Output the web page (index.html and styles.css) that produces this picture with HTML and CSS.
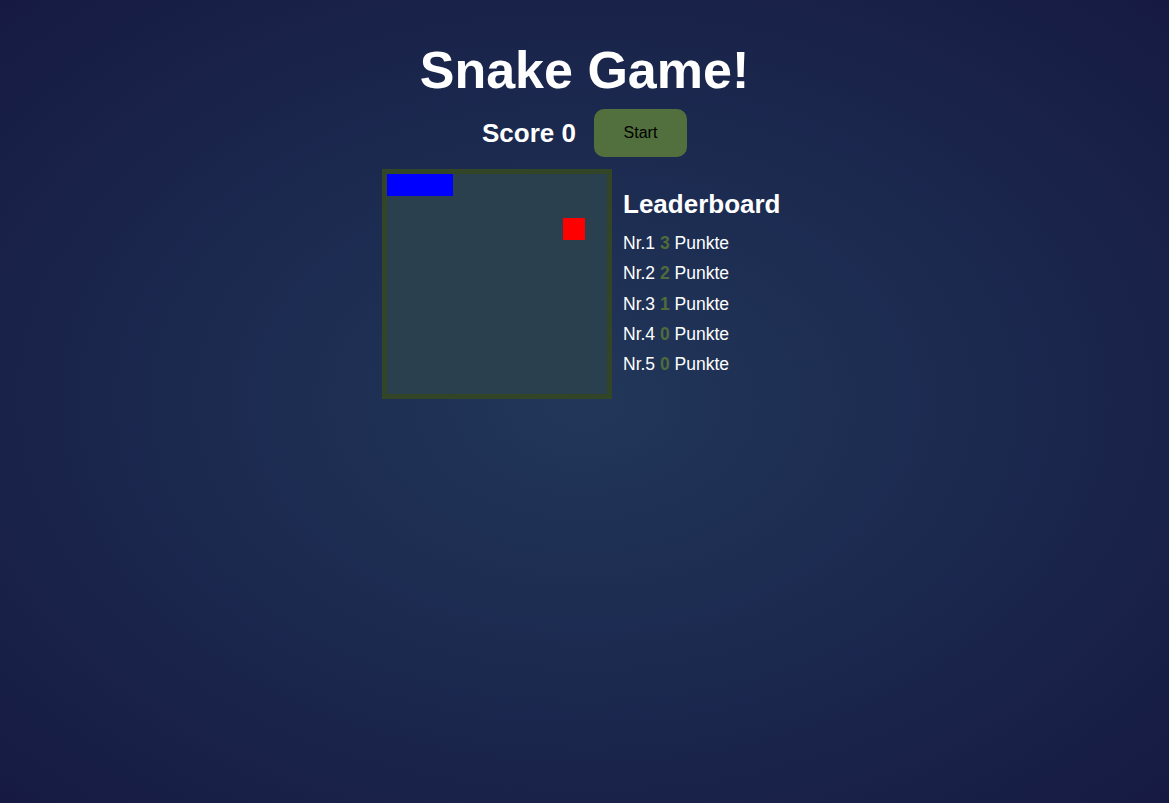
FILE: index.html
```html
<!DOCTYPE html>
<html lang="de">
<head>
<meta charset="utf-8">
<title>Snake Game!</title>
<link rel="stylesheet" href="styles.css">
</head>
<body>
<main class="page">
  <h1 class="title">Snake Game!</h1>
  <div class="controls">
    <span class="score">Score 0</span>
    <button class="start-btn">Start</button>
  </div>
  <div class="game-row">
    <div class="board">
      <div class="snake"></div>
      <div class="food"></div>
    </div>
    <section class="leaderboard">
      <h2 class="lb-title">Leaderboard</h2>
      <ol class="lb-list">
        <li>Nr.1 <b class="pts">3</b> Punkte</li>
        <li>Nr.2 <b class="pts">2</b> Punkte</li>
        <li>Nr.3 <b class="pts">1</b> Punkte</li>
        <li>Nr.4 <b class="pts">0</b> Punkte</li>
        <li>Nr.5 <b class="pts">0</b> Punkte</li>
      </ol>
    </section>
  </div>
</main>
</body>
</html>
```

FILE: styles.css
```css
html, body {
  margin: 0;
  padding: 0;
  height: 100%;
}

body {
  background: radial-gradient(ellipse at 50% 50%, #213759 0%, #1c2a50 45%, #161a42 100%);
  font-family: "Liberation Sans", Arial, sans-serif;
  color: #ffffff;
}

.page {
  display: flex;
  flex-direction: column;
  align-items: center;
  padding-top: 39px;
}

.title {
  margin: 0;
  font-size: 52px;
  line-height: 62px;
  font-weight: bold;
}

.controls {
  display: flex;
  align-items: center;
  gap: 18px;
  margin-top: 8px;
}

.score {
  font-size: 26px;
  font-weight: bold;
}

.start-btn {
  width: 93px;
  height: 48px;
  border: none;
  border-radius: 10px;
  background: #52703d;
  color: #000000;
  font-family: "Liberation Sans", Arial, sans-serif;
  font-size: 16px;
  padding: 0;
}

.game-row {
  display: flex;
  align-items: flex-start;
  gap: 11px;
  margin-top: 12px;
  margin-left: -4px;
}

.board {
  width: 220px;
  height: 220px;
  border: 5px solid #324526;
  background: #2a404f;
  display: grid;
  grid-template-columns: repeat(10, 22px);
  grid-template-rows: repeat(10, 22px);
}

.snake {
  grid-row: 1;
  grid-column: 1 / span 3;
  background: #0000ff;
}

.food {
  grid-row: 3;
  grid-column: 9;
  background: #ff0000;
}

.leaderboard {
  width: 160px;
}

.lb-title {
  margin: 20px 0 9px;
  font-size: 26px;
  line-height: 30px;
  font-weight: bold;
}

.lb-list {
  list-style: none;
  margin: 0;
  padding: 0;
  font-size: 17.5px;
  line-height: 30.3px;
}

.pts {
  color: #4f6b3b;
}
```
